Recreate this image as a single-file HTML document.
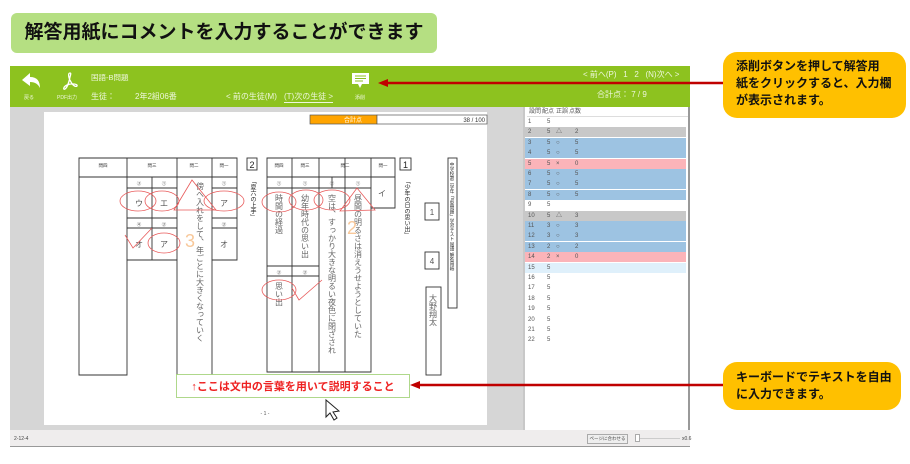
<!DOCTYPE html>
<html><head><meta charset="utf-8">
<style>
*{margin:0;padding:0;box-sizing:border-box}
body{width:910px;height:464px;background:#fff;position:relative;overflow:hidden;font-family:"Liberation Sans","Noto Sans CJK JP",sans-serif}
.a{position:absolute}
.title{left:11px;top:13px;width:426px;height:40px;background:#b5df82;border-radius:6px;font-size:19px;font-weight:bold;color:#111;text-align:center;line-height:40px;white-space:nowrap}
.bar{left:10px;top:66px;width:680px;height:41px;background:#8dc21f;color:#eef7dd;font-size:7.5px}
.bar span{position:absolute;white-space:nowrap}
.gray{left:10px;top:107px;width:513px;height:323px;background:#d6d6d6}
.paper{left:44px;top:112px;width:443px;height:313px;background:#fff}
.panel{left:523px;top:107px;width:167px;height:323px;background:#fff;border-left:2px solid #c8c8c8;border-right:2px solid #999;font-size:6px;color:#555}
.row{position:absolute;left:2px;width:161px;height:10px;line-height:10px}
.row span{position:absolute}
.status{left:10px;top:430px;width:680px;height:17px;background:#efeded;border-bottom:1px solid #999;font-size:5px;color:#444}
.call{background:#ffc000;border-radius:14px;font-size:12px;font-weight:bold;color:#111;line-height:17px;padding:6px 10px 6px 13px;white-space:nowrap}
</style></head><body>
<div class="a title">解答用紙にコメントを入力することができます</div>

<div class="a bar">
<svg class="a" style="left:10px;top:6px" width="22" height="18" viewBox="0 0 22 18"><path d="M2 8 L10 1 L10 5 C17 5 20 9 20 16 C18 12 15 10 10 10 L10 14 Z" fill="#fff"/></svg>
<span style="left:14px;top:28px;font-size:5px">戻る</span>
<svg class="a" style="left:50px;top:5px" width="20" height="20" viewBox="0 0 20 20"><path d="M10 2 C8 2 8 6 11 11 C13 15 16 16 17 15 C18 13 12 12 7 14 C3 16 3 19 5 18 C7 17 9 11 10 6 C11 3 11 2 10 2Z" fill="none" stroke="#fff" stroke-width="1.3"/></svg>
<span style="left:47px;top:28px;font-size:5px">PDF出力</span>
<span style="left:81px;top:6px;font-size:7.5px">国語-B問題</span>
<span style="left:81px;top:25px;font-size:8px">生徒：</span>
<span style="left:125px;top:25px;font-size:8px">2年2組06番</span>
<span style="left:216px;top:25px;font-size:8px">&lt; 前の生徒(M)</span>
<span style="left:274px;top:25px;font-size:8px;border-bottom:1px solid #eef7dd">(T)次の生徒 &gt;</span>
<svg class="a" style="left:342px;top:7px" width="17" height="16" viewBox="0 0 17 16"><path d="M0 0 H17 V11 H10 L8 15 L6 11 H0Z" fill="#fff"/><path d="M3 3H14M3 5.5H14M3 8H11" stroke="#8dc21f" stroke-width="1"/></svg>
<span style="left:345px;top:28px;font-size:5px">添削</span>
<span style="left:573px;top:3px;font-size:8px">&lt; 前へ(P) &nbsp;&nbsp;1 &nbsp;&nbsp;2 &nbsp;&nbsp;(N)次へ &gt;</span>
<span style="left:587px;top:23px;font-size:8px">合計点： 7 / 9</span>
</div>

<div class="a gray"></div>
<div class="a paper"></div>

<svg class="a" style="left:0;top:0" width="910" height="464" viewBox="0 0 910 464" font-family="Liberation Sans,Noto Sans CJK JP,sans-serif">
<rect x="310" y="115" width="67" height="9" fill="#ffa400" stroke="#555" stroke-width="0.7"/>
<rect x="377" y="115" width="110" height="9" fill="#fff" stroke="#555" stroke-width="0.7"/>
<text x="344" y="122" font-size="6" fill="#fff">合計点</text>
<text x="485" y="122" font-size="6" fill="#333" text-anchor="end">38 / 100</text>
<g fill="none" stroke="#333" stroke-width="0.9">
<path d="M79 158 H237 V260 H212 V375 H177 V260 H127 V375 H79 Z"/>
<path d="M79 177 H237 M127 158 V260 M177 158 V260 M212 158 V260 M127 188 H177 M212 188 H237 M127 218 H177 M212 218 H237 M127 228 H177 M212 228 H237 M152 177 V260"/>
<path d="M267 158 H395 V208 H371 V372 H267 Z"/>
<path d="M267 177 H395 M292 158 V372 M319 158 V372 M345 158 V372 M371 158 V208 M267 188 H371 M267 266 H319 M267 276 H319 M332 177 V188"/>
<rect x="247" y="158" width="10" height="12"/>
<rect x="400" y="158" width="11" height="12"/>
<rect x="425" y="203" width="14" height="17"/>
<rect x="425" y="252" width="14" height="17"/>
<rect x="426" y="287" width="15" height="88"/>
<rect x="448" y="158" width="9" height="150"/>
</g>
<text x="252" y="168" font-size="9" text-anchor="middle" fill="#222">2</text>
<text x="405.5" y="168" font-size="9" text-anchor="middle" fill="#222">1</text>
<g font-size="6" fill="#222" writing-mode="tb">
<text x="252" y="178">「夏六の上手」</text>
<text x="406" y="178">「少年の日の思い出」</text>
<text x="452.5" y="162" font-size="4.5">中学校第二学年「II型問題」学習テスト 国語 解答用紙</text>
</g>
<g font-size="4.5" fill="#333" text-anchor="middle">
<text x="103" y="167">問四</text><text x="152" y="167">問三</text><text x="194" y="167">問二</text><text x="224" y="167">問一</text>
<text x="279" y="167">問四</text><text x="305" y="167">問三</text><text x="345" y="167">問二</text><text x="383" y="167">問一</text>
<text x="139" y="185">③</text><text x="164" y="185">①</text><text x="224" y="185">①</text>
<text x="139" y="226">④</text><text x="164" y="226">②</text><text x="224" y="226">②</text>
<text x="279" y="185">①</text><text x="305" y="185">①</text><text x="332" y="185">②</text><text x="358" y="185">①</text>
<text x="279" y="274">②</text><text x="305" y="274">②</text>
</g>
<g font-size="8" fill="#666" writing-mode="tb">
<text x="200" y="182">傍へ入れをして、年ごとに大きくなっていく</text>
<text x="279" y="194">時間の経過</text>
<text x="305" y="194">幼年時代の思い出</text>
<text x="332" y="194">空は、すっかり大きな明るい夜色に閉ざされ</text>
<text x="358" y="194">昼間の明るさは消えうせようとしていた</text>
<text x="279" y="282">思い出</text>
<text x="433" y="294">大野翔太</text>
</g>
<g font-size="8" fill="#555" text-anchor="middle">
<text x="139" y="206">ウ</text><text x="164" y="206">エ</text><text x="224" y="206">ア</text>
<text x="139" y="247">オ</text><text x="164" y="247">ア</text><text x="224" y="247">オ</text>
<text x="382" y="196">イ</text><text x="432" y="215">1</text><text x="432" y="264">4</text>
</g>
<text x="190" y="247" font-size="18" fill="#f8c89a" text-anchor="middle">3</text>
<text x="352" y="234" font-size="18" fill="#f8c89a" text-anchor="middle">2</text>
<g fill="none" stroke="#e85a5a" stroke-width="0.8">
<ellipse cx="138" cy="201" rx="18" ry="10"/><ellipse cx="162" cy="201" rx="17" ry="10"/><ellipse cx="224" cy="201" rx="20" ry="10"/>
<ellipse cx="164" cy="243" rx="16" ry="10"/>
<path d="M174 210 L192 180 L216 210 Z"/><path d="M125 235 L133 248 L152 228"/>
<ellipse cx="279" cy="202" rx="17" ry="10"/><ellipse cx="306" cy="200" rx="17" ry="10"/><ellipse cx="332" cy="200" rx="18" ry="10"/>
<path d="M340 211 L357 188 L375 210 Z"/>
<ellipse cx="279" cy="290" rx="17" ry="10"/><path d="M292 288 L299 300 L322 280"/>
</g>
<rect x="176.5" y="374.5" width="233" height="23" fill="#fff" stroke="#9ccf6f" stroke-width="0.8"/>
<text x="293" y="390" font-size="11" font-weight="bold" fill="#ee2222" text-anchor="middle">↑ここは文中の言葉を用いて説明すること</text>
<text x="265" y="415" font-size="5" fill="#555" text-anchor="middle">- 1 -</text>
<path d="M326 400 L326 417 L330 413 L334 420 L337 418 L333 412 L339 411 Z" fill="#fff" stroke="#222" stroke-width="1"/>
</svg>

<div class="a panel">
<div class="row" style="top:0px;border-bottom:1px solid #ddd"><span style="left:2px">設問</span><span style="left:15px">配点</span><span style="left:29px">正誤</span><span style="left:42px">点数</span></div>
</div>
<div class="a" style="left:525px;top:117px;width:163px;font-size:6px;color:#555">
<div class="row" style="top:0;left:0;width:161px"><span style="left:3px">1</span><span style="left:22px">5</span></div>
<div class="row" style="top:10.4px;left:0;background:#c8c8c8"><span style="left:3px">2</span><span style="left:22px">5</span><span style="left:31px">△</span><span style="left:50px">2</span></div>
<div class="row" style="top:20.8px;left:0;background:#9dc3e2"><span style="left:3px">3</span><span style="left:22px">5</span><span style="left:31px">○</span><span style="left:50px">5</span></div>
<div class="row" style="top:31.2px;left:0;background:#9dc3e2"><span style="left:3px">4</span><span style="left:22px">5</span><span style="left:31px">○</span><span style="left:50px">5</span></div>
<div class="row" style="top:41.6px;left:0;background:#fbb4b9"><span style="left:3px">5</span><span style="left:22px">5</span><span style="left:31px">×</span><span style="left:50px">0</span></div>
<div class="row" style="top:52px;left:0;background:#9dc3e2"><span style="left:3px">6</span><span style="left:22px">5</span><span style="left:31px">○</span><span style="left:50px">5</span></div>
<div class="row" style="top:62.4px;left:0;background:#9dc3e2"><span style="left:3px">7</span><span style="left:22px">5</span><span style="left:31px">○</span><span style="left:50px">5</span></div>
<div class="row" style="top:72.8px;left:0;background:#9dc3e2"><span style="left:3px">8</span><span style="left:22px">5</span><span style="left:31px">○</span><span style="left:50px">5</span></div>
<div class="row" style="top:83.2px;left:0"><span style="left:3px">9</span><span style="left:22px">5</span></div>
<div class="row" style="top:93.6px;left:0;background:#c8c8c8"><span style="left:3px">10</span><span style="left:22px">5</span><span style="left:31px">△</span><span style="left:50px">3</span></div>
<div class="row" style="top:104px;left:0;background:#9dc3e2"><span style="left:3px">11</span><span style="left:22px">3</span><span style="left:31px">○</span><span style="left:50px">3</span></div>
<div class="row" style="top:114.4px;left:0;background:#9dc3e2"><span style="left:3px">12</span><span style="left:22px">3</span><span style="left:31px">○</span><span style="left:50px">3</span></div>
<div class="row" style="top:124.8px;left:0;background:#9dc3e2"><span style="left:3px">13</span><span style="left:22px">2</span><span style="left:31px">○</span><span style="left:50px">2</span></div>
<div class="row" style="top:135.2px;left:0;background:#fbb4b9"><span style="left:3px">14</span><span style="left:22px">2</span><span style="left:31px">×</span><span style="left:50px">0</span></div>
<div class="row" style="top:145.6px;left:0;background:#dff0fb"><span style="left:3px">15</span><span style="left:22px">5</span></div>
<div class="row" style="top:156px;left:0"><span style="left:3px">16</span><span style="left:22px">5</span></div>
<div class="row" style="top:166.4px;left:0"><span style="left:3px">17</span><span style="left:22px">5</span></div>
<div class="row" style="top:176.8px;left:0"><span style="left:3px">18</span><span style="left:22px">5</span></div>
<div class="row" style="top:187.2px;left:0"><span style="left:3px">19</span><span style="left:22px">5</span></div>
<div class="row" style="top:197.6px;left:0"><span style="left:3px">20</span><span style="left:22px">5</span></div>
<div class="row" style="top:208px;left:0"><span style="left:3px">21</span><span style="left:22px">5</span></div>
<div class="row" style="top:218.4px;left:0"><span style="left:3px">22</span><span style="left:22px">5</span></div>
</div>

<div class="a status">
<span class="a" style="left:4px;top:6px">2-12-4</span>
<span class="a" style="left:577px;top:4px;width:41px;height:10px;border:1px solid #aaa;background:#eee;font-size:4.5px;line-height:8px;text-align:center">ページに合わせる</span>
<span class="a" style="left:625px;top:4px;width:5px;height:8px;border:1px solid #aaa;background:#fff"></span>
<span class="a" style="left:630px;top:8px;width:40px;height:1px;background:#ccc"></span>
<span class="a" style="left:672px;top:6px">x0.6</span>
</div>

<svg class="a" style="left:0;top:0" width="910" height="464" viewBox="0 0 910 464">
<line x1="384" y1="83" x2="723" y2="83" stroke="#c00000" stroke-width="2.5"/>
<path d="M378 83 L388 79 L388 87 Z" fill="#c00000"/>
<line x1="416" y1="385" x2="723" y2="385" stroke="#c00000" stroke-width="2.5"/>
<path d="M410 385 L420 381 L420 389 Z" fill="#c00000"/>
</svg>

<div class="a call" style="left:723px;top:52px;width:183px;height:66px">添削ボタンを押して解答用<br>紙をクリックすると、入力欄<br>が表示されます。</div>
<div class="a call" style="left:723px;top:362px;width:178px;height:48px;padding-top:7px">キーボードでテキストを自由<br>に入力できます。</div>
</body></html>
